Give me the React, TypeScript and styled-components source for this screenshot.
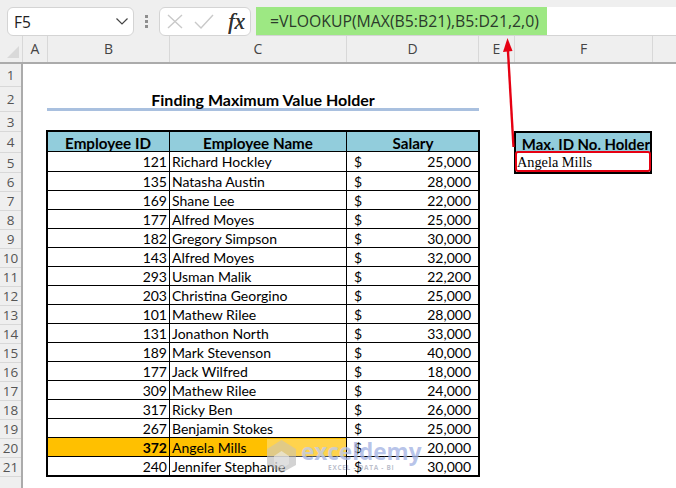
import React from "react";
import styled, { createGlobalStyle } from "styled-components";

const Global = createGlobalStyle`
  html, body { margin: 0; padding: 0; background: #fff; }
  body { width: 676px; height: 488px; overflow: hidden; font-family: "Open Sans", "Liberation Sans", sans-serif; }
`;

const Page = styled.div`
  position: relative;
  width: 676px;
  height: 488px;
  overflow: hidden;
  background: #fff;
`;

const FormulaBar = styled.div`
  height: 36px;
  box-sizing: border-box;
  padding: 7px 0 0 7px;
  display: flex;
  background: #efefef;
`;

const NameBox = styled.div`
  width: 127px;
  height: 29px;
  box-sizing: border-box;
  background: #fff;
  border: 1px solid #d4d4d4;
  border-radius: 6px;
  display: flex;
  align-items: center;
  justify-content: space-between;
  padding: 0 4px 0 6px;
  font-size: 15.5px;
  color: #222;
`;

const Dots = styled.div`
  width: 25px;
  display: flex;
  flex-direction: column;
  align-items: center;
  justify-content: center;
  gap: 2px;
  height: 29px;
  & > i { display: block; width: 3px; height: 3px; background: #8e8e8e; }
`;

const FxBox = styled.div`
  width: 92px;
  height: 29px;
  box-sizing: border-box;
  background: #fff;
  border: 1px solid #d4d4d4;
  border-radius: 6px;
  display: flex;
  align-items: center;
  padding-left: 7px;
  gap: 11px;
`;

const Fx = styled.span`
  font-family: "Liberation Serif", serif;
  font-style: italic;
  font-size: 23px;
  color: #333;
  margin-left: 3px;
  line-height: 1;
  text-shadow: 0.3px 0 0 #333;
`;

const FormulaInput = styled.div`
  margin-left: 5px;
  flex: 1;
  height: 29px;
  box-sizing: border-box;
  background: #fff;
  border-bottom: 1px solid #d4d4d4;
`;

const Formula = styled.div`
  width: 291px;
  height: 28px;
  box-sizing: border-box;
  padding-left: 14px;
  background: #9de883;
  color: #2b3a2b;
  font-size: 15.8px;
  line-height: 28px;
  white-space: nowrap;
`;

const ColumnBar = styled.div`
  height: 28px;
  box-sizing: border-box;
  display: flex;
  background: #efefef;
  border-bottom: 2px solid #ababab;
`;

const Corner = styled.div`
  width: 23px;
  flex: none;
  border-right: 1px solid #d8d8d8;
  box-sizing: border-box;
  display: flex;
  align-items: flex-end;
  padding: 0 0 4px 7px;
`;

const ColumnHead = styled.div<{ $w: number }>`
  width: ${(p) => p.$w}px;
  flex: none;
  box-sizing: border-box;
  border-right: 1px solid #d8d8d8;
  text-align: center;
  font-size: 14px;
  line-height: 26px;
  color: #444;
`;

const Body = styled.div`
  display: flex;
  position: relative;
`;

const RowHeads = styled.div`
  width: 23px;
  flex: none;
  box-sizing: border-box;
  background: #efefef;
  border-right: 2px solid #ababab;
  height: 424px;
`;

const RowHead = styled.div<{ $h: number }>`
  height: ${(p) => p.$h}px;
  box-sizing: border-box;
  border-bottom: 1px solid #d8d8d8;
  text-align: center;
  font-size: 13.5px;
  line-height: ${(p) => p.$h}px;
  color: #555;
`;

const Sheet = styled.div`
  display: grid;
  grid-template-columns: 24px 123px 177px 132px 35px 138px;
  grid-template-rows: 22px 25px 20px 21px 20px repeat(16, 19px);
`;

const Title = styled.div`
  grid-column: 2 / 5;
  grid-row: 2;
  border-bottom: 3px solid #a9c0df;
  font-family: Lato, sans-serif;
  font-weight: 700;
  font-size: 16px;
  text-align: center;
  line-height: 28px;
  color: #000;
  height: 25px;
  box-sizing: border-box;
`;

const Table = styled.div`
  grid-column: 2 / 5;
  grid-row: 4 / 22;
  display: grid;
  grid-template-columns: subgrid;
  grid-template-rows: subgrid;
  position: relative;
  outline: 2px solid #000;
  outline-offset: -1px;
  font-family: Lato, sans-serif;
  font-size: 14px;
  color: #000;
`;

const Cell = styled.div<{ $last?: boolean; $end?: boolean }>`
  box-sizing: border-box;
  border-right: ${(p) => (p.$last ? "none" : "1px solid #000")};
  border-bottom: ${(p) => (p.$end ? "none" : "1px solid #000")};
  white-space: nowrap;
  line-height: 19px;
`;

const HeadCell = styled(Cell)`
  background: #92cddc;
  font-weight: 700;
  font-size: 15.2px;
  text-align: center;
  line-height: 24px;
`;

const IdCell = styled(Cell)<{ $hl?: boolean }>`
  text-align: right;
  padding-right: 2px;
  background: ${(p) => (p.$hl ? "#ffc000" : "transparent")};
  font-weight: ${(p) => (p.$hl ? 700 : 400)};
`;

const NameCell = styled(Cell)<{ $hl?: boolean }>`
  padding-left: 2px;
  background: ${(p) => (p.$hl ? "#ffc000" : "transparent")};
`;

const SalaryCell = styled(Cell)`
  display: flex;
  justify-content: space-between;
  padding: 0 8px 0 7px;
`;

const HolderHead = styled.div`
  grid-column: 6;
  grid-row: 4;
  box-sizing: border-box;
  background: #92cddc;
  border: 2px solid #000;
  border-bottom: none;
  font-family: Lato, sans-serif;
  font-weight: 700;
  font-size: 14.9px;
  line-height: 22px;
  text-align: right;
  white-space: nowrap;
  color: #000;
`;

const HolderCell = styled.div`
  grid-column: 6;
  grid-row: 5;
  box-sizing: border-box;
  height: 22px;
  border: 2px solid #000;
  border-top: none;
  position: relative;
  font-family: "Liberation Serif", serif;
  font-size: 14.3px;
  line-height: 20px;
  padding-left: 1px;
  color: #000;
  &::after {
    content: "";
    position: absolute;
    left: -1px;
    right: -1px;
    top: -1px;
    bottom: 0;
    border: 2px solid #e60012;
    border-radius: 3px;
  }
`;

const Overlay = styled.svg`
  position: absolute;
  left: 0;
  top: 0;
  pointer-events: none;
`;

const Watermark = styled.div`
  position: absolute;
  left: 267px;
  top: 440px;
  display: flex;
  gap: 5px;
  pointer-events: none;
  &::before {
    content: "";
    position: absolute;
    left: 0;
    top: -1px;
    width: 79px;
    height: 18px;
    background: rgba(255, 255, 255, 0.3);
  }
`;

const WatermarkWords = styled.div`
  display: flex;
  flex-direction: column;
  align-items: center;
`;

const WatermarkName = styled.div`
  font-family: "Open Sans", sans-serif;
  font-weight: 700;
  font-size: 22.5px;
  line-height: 24px;
  color: rgba(165, 180, 228, 0.8);
`;

const WatermarkTag = styled.div`
  font-family: "Open Sans", sans-serif;
  font-weight: 700;
  font-size: 6.5px;
  line-height: 8px;
  letter-spacing: 0.7px;
  color: rgba(150, 155, 175, 0.65);
  white-space: nowrap;
`;

const rows: [number, string, string][] = [
  [121, "Richard Hockley", "25,000"],
  [135, "Natasha Austin", "28,000"],
  [169, "Shane Lee", "22,000"],
  [177, "Alfred Moyes", "25,000"],
  [182, "Gregory Simpson", "30,000"],
  [143, "Alfred Moyes", "32,000"],
  [293, "Usman Malik", "22,200"],
  [203, "Christina Georgino", "25,000"],
  [101, "Mathew Rilee", "28,000"],
  [131, "Jonathon North", "33,000"],
  [189, "Mark Stevenson", "40,000"],
  [177, "Jack Wilfred", "18,000"],
  [309, "Mathew Rilee", "24,000"],
  [317, "Ricky Ben", "26,000"],
  [267, "Benjamin Stokes", "25,000"],
  [372, "Angela Mills", "20,000"],
  [240, "Jennifer Stephanie", "30,000"],
];

const columns: [string, number][] = [
  ["A", 25],
  ["B", 122],
  ["C", 177],
  ["D", 132],
  ["E", 36],
  ["F", 138],
];

const rowHeights = [23, 25, 20, 21, 20, ...Array(16).fill(19), 12];

export default function App() {
  return (
    <Page>
      <Global />
      <FormulaBar>
        <NameBox>
          F5
          <svg width="14" height="9" viewBox="0 0 14 9" fill="none">
            <path d="M1.5 1.5 L7 7 L12.5 1.5" stroke="#444" strokeWidth="1.2" />
          </svg>
        </NameBox>
        <Dots>
          <i />
          <i />
          <i />
        </Dots>
        <FxBox>
          <svg width="16" height="15" viewBox="0 0 16 15" fill="none">
            <path d="M1 1 L15 14 M15 1 L1 14" stroke="#c9c9c9" strokeWidth="1.4" />
          </svg>
          <svg width="20" height="15" viewBox="0 0 20 15" fill="none">
            <path d="M1 8 L7 14 L19 1" stroke="#c9c9c9" strokeWidth="1.4" />
          </svg>
          <Fx>fx</Fx>
        </FxBox>
        <FormulaInput>
          <Formula>=VLOOKUP(MAX(B5:B21),B5:D21,2,0)</Formula>
        </FormulaInput>
      </FormulaBar>
      <ColumnBar>
        <Corner>
          <svg width="12" height="12" viewBox="0 0 12 12">
            <path d="M12 0 V12 H0 Z" fill="#d9d9d9" />
          </svg>
        </Corner>
        {columns.map(([name, w]) => (
          <ColumnHead key={name} $w={w}>
            {name}
          </ColumnHead>
        ))}
      </ColumnBar>
      <Body>
        <RowHeads>
          {rowHeights.map((h, i) => (
            <RowHead key={i} $h={h}>
              {i < 21 ? i + 1 : ""}
            </RowHead>
          ))}
        </RowHeads>
        <Sheet>
          <Title>Finding Maximum Value Holder</Title>
          <Table>
            <HeadCell>Employee ID</HeadCell>
            <HeadCell>Employee Name</HeadCell>
            <HeadCell $last>Salary</HeadCell>
            {rows.map(([id, name, pay], i) => {
              const end = i === rows.length - 1;
              const hl = id === 372;
              return (
                <React.Fragment key={i}>
                  <IdCell $hl={hl} $end={end}>
                    {id}
                  </IdCell>
                  <NameCell $hl={hl} $end={end}>
                    {name}
                  </NameCell>
                  <SalaryCell $last $end={end}>
                    <span>$</span>
                    <span>{pay}</span>
                  </SalaryCell>
                </React.Fragment>
              );
            })}
          </Table>
          <HolderHead>Max. ID No. Holder</HolderHead>
          <HolderCell>Angela Mills</HolderCell>
        </Sheet>
      </Body>
      <Overlay width="676" height="488" viewBox="0 0 676 488">
        <path d="M513.5 147 L507.8 48" stroke="#e60012" strokeWidth="2.4" fill="none" />
        <path d="M507.5 38 L503 52 L512.5 51 Z" fill="#e60012" />
      </Overlay>
      <Watermark>
        <svg width="29" height="33" viewBox="0 0 29 33">
          <path d="M14.5 0 L29 9 V25 L14.5 33 L0 25 V9 Z" fill="#a8a8a8" opacity="0.5" />
          <path d="M14.5 11 L22 16 V24 L14.5 29 L7 24 V16 Z" fill="#e8e8e8" opacity="0.6" />
        </svg>
        <WatermarkWords>
          <WatermarkName>exceldemy</WatermarkName>
          <WatermarkTag>EXCEL - DATA - BI</WatermarkTag>
        </WatermarkWords>
      </Watermark>
    </Page>
  );
}
